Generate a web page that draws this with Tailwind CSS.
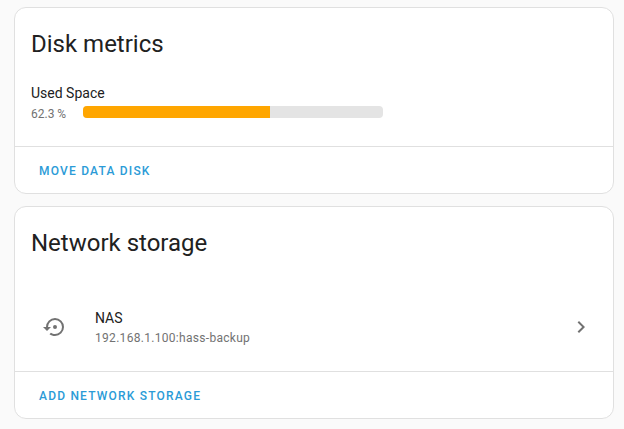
<!DOCTYPE html>
<html lang="en">
<head>
  <meta charset="utf-8"/>
  <meta content="width=device-width, initial-scale=1" name="viewport"/>
  <title>Storage</title>
  <script src="https://cdn.jsdelivr.net/npm/@tailwindcss/browser@4"></script>
</head>
<body class="bg-[#fafafa] text-[#212121] font-[Roboto,sans-serif] min-h-screen">

  <main class="flex flex-col gap-3 pt-[7px] pb-2.5 pl-3.5 pr-2.5">

    <!-- Disk metrics -->
    <section class="bg-white border border-[#e0e0e0] rounded-xl">
      <h1 class="px-4 pt-3 text-2xl leading-[48px]">Disk metrics</h1>
      <div class="px-4 pt-4 pb-[22px]">
        <div id="used-label" class="text-sm leading-[18px]">Used Space</div>
        <div class="flex items-center gap-4 mt-0.5">
          <span class="w-9 text-xs leading-5 text-[#727272] whitespace-nowrap">62.3 %</span>
          <div role="progressbar" aria-labelledby="used-label" aria-valuenow="62.3" aria-valuemin="0" aria-valuemax="100" class="w-full max-w-[300px] h-3 -mt-1 rounded bg-[#e4e4e4] overflow-hidden">
            <div class="h-full bg-[#ffa600]" style="width: 62.3%"></div>
          </div>
        </div>
      </div>
      <div class="border-t border-[#e0e0e0] px-4 pt-1.5 pb-1">
        <button type="button" class="block h-9 px-2 text-xs font-medium tracking-widest uppercase text-[#2b9bd7]">Move data disk</button>
      </div>
    </section>

    <!-- Network storage -->
    <section class="bg-white border border-[#e0e0e0] rounded-xl">
      <h1 class="px-4 pt-3 text-2xl leading-[48px]">Network storage</h1>
      <ul class="pt-5 pb-1">
        <li>
          <a href="#" class="flex items-center h-20 pl-7 pr-5">
            <svg class="size-6 shrink-0 text-[#727272]" viewBox="0 0 24 24" fill="currentColor" aria-hidden="true">
              <path d="M12,3A9,9 0 0,0 3,12H0L4,16L8,12H5A7,7 0 0,1 12,5A7,7 0 0,1 19,12A7,7 0 0,1 12,19C10.5,19 9.09,18.5 7.94,17.7L6.5,19.14C8.04,20.3 9.94,21 12,21A9,9 0 0,0 21,12A9,9 0 0,0 12,3M14,12A2,2 0 0,0 12,10A2,2 0 0,0 10,12A2,2 0 0,0 12,14A2,2 0 0,0 14,12Z"/>
            </svg>
            <div class="flex-1 ml-7 pt-0.5">
              <div class="text-sm leading-5">NAS</div>
              <div class="text-xs leading-5 tracking-wide text-[#727272]">192.168.1.100:hass-backup</div>
            </div>
            <svg class="size-6 shrink-0 text-[#727272]" viewBox="0 0 24 24" fill="currentColor" aria-hidden="true">
              <path d="M8.59,16.58L13.17,12L8.59,7.41L10,6L16,12L10,18L8.59,16.58Z"/>
            </svg>
          </a>
        </li>
      </ul>
      <div class="border-t border-[#e0e0e0] px-4 pt-1.5 pb-1">
        <button type="button" class="block h-9 px-2 text-xs font-medium tracking-widest uppercase text-[#2b9bd7]">Add network storage</button>
      </div>
    </section>

  </main>

</body>
</html>
